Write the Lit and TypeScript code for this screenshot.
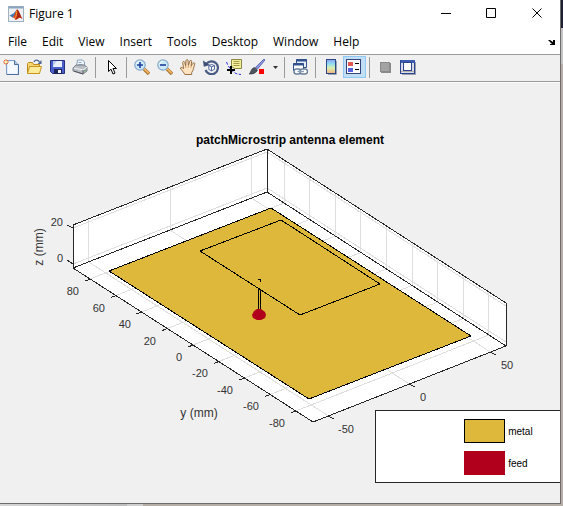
import { LitElement, html, css, svg } from "lit";
import { customElement } from "lit/decorators.js";

type Pt = [number, number];

const MENUS = ["File", "Edit", "View", "Insert", "Tools", "Desktop", "Window", "Help"];

const glass = (sign: unknown) => svg`
  <path d="M10 10l5 5" stroke="#a8752c" stroke-width="3.4"/>
  <path d="M10 9.6l4.6 4.6" stroke="#f0b565" stroke-width="1.8"/>
  <circle cx="6" cy="6" r="5.2" fill="#cdeaf8" stroke="#86a9c9" stroke-width="1.2"/>
  <path d="M2.6 5a3.8 3.8 0 0 1 3-2.8" stroke="#fff" fill="none"/>
  ${sign}`;

const ICONS: Record<string, unknown> = {
  new: svg`
    <path d="M3.500 1.500h8l4 4v10h-12z" fill="#dceafb" stroke="#7f9cc6"/>
    <path d="M5 14.500v-12h6v4h3v8z" fill="#f6faff"/>
    <path d="M11.500 1.500v4h4" fill="#b4c8e6" stroke="#4f6fa3"/>
    <path d="M15.500 6v10M4 15.500h12" stroke="#4f6fa3"/>
    <path d="M3 0v6M0 3h6M1 1l4 4M5 1l-4 4" stroke="#e8743b"/>
    <rect x="2" y="2" width="2" height="2" fill="#fff3b0"/>`,
  open: svg`
    <path d="M1.500 14.500v-10l1-1h4l1 2h6v9z" fill="#f7d774" stroke="#c08a1e"/>
    <path d="M1.500 14.500l2-7h12l-2 7z" fill="#fdeb9a" stroke="#c99420"/>
    <path d="M8 3c1-2.500 4-2.500 5.500 0" stroke="#4c6a94" fill="none" stroke-width="1.300"/>
    <path d="M15.500 1v4h-4z" fill="#4c6a94"/>`,
  save: svg`
    <path d="M1.500 1.500h14v13h-12l-2-2z" fill="#4a5fcc" stroke="#22307f"/>
    <rect x="4" y="2" width="9" height="6" fill="#e9effb"/>
    <path d="M4 2h4l-4 5z" fill="#b9c9ee"/>
    <rect x="5" y="10" width="8" height="5" fill="#1d2659"/>
    <rect x="9" y="11" width="3" height="3" fill="#f3f5fd"/>`,
  print: svg`
    <path d="M4.500 7l1-6h5l2 2v4z" fill="#eef6ff" stroke="#8aa1bd"/>
    <path d="M6.500 3.500h3M6.500 5.500h4" stroke="#8fa9cc"/>
    <path d="M1 9l3-3h8l3 2v4l-4 3-10-3z" fill="#b9bdc4" stroke="#777c85"/>
    <path d="M2 9l9 2 4-3" fill="none" stroke="#f4f5f7"/>
    <path d="M2 12l9 3M11 11v4" stroke="#555a63"/>
    <path d="M12 12l2-1" stroke="#5aa550"/>`,
  pointer: svg`
    <path d="M5.500 1.500v11l2.500-2.300 2 4.800 2-.9-2-4.600h3.500z" fill="#fff" stroke="#000"/>`,
  zoomIn: glass(svg`<path d="M3 6h6M6 3v6" stroke="#1f3f9c" stroke-width="1.600"/>`),
  zoomOut: glass(svg`<path d="M3 6h6" stroke="#1f3f9c" stroke-width="1.600"/>`),
  pan: svg`
    <path d="M4.800 15.500c-.6-2-3.800-4.600-4.400-6.600.6-1 2-.6 3.200.9L2.700 3.400c.3-1.300 1.600-1.300 2 0l1 3.300L6 1.600c.4-1.400 1.800-1.300 2 0l.4 4.700L9.800 2c.6-1.200 1.900-.8 1.900.5l-.6 4.400 1.900-2.700c.9-.9 2-.3 1.700.9-.9 3-1.300 6.400-3 8.400v2z" fill="#fde3c2" stroke="#8c6236" stroke-width=".9"/>
    <path d="M5.700 7v2M8.300 6.500v2.300M11 7v2" stroke="#c98f53" stroke-width=".8"/>`,
  rotate: svg`
    <path d="M3.200 5.200A6.400 6.400 0 1 1 2.500 11" fill="none" stroke="#4a5d85" stroke-width="2.200"/>
    <path d="M0 1.500l.8 6.300 6-1.800z" fill="#3c4f77"/>
    <path d="M5.800 6.500l3-1 2.700 1.200v3.600l-3 1.500-2.700-1.400zM5.800 6.500l2.700 1.300 3-1.100M8.500 7.800v4" fill="#fff" stroke="#3d5c92" stroke-width=".9"/>`,
  tip: svg`
    <path d="M.5 3c1 3 3 6.500 6.500 9.500s5.500 2.500 8 3" fill="none" stroke="#2b32e0" stroke-dasharray="3 1.500"/>
    <path d="M5.500 .5h10v9h-7l-3-2z" fill="#f5ee9d" stroke="#8c8743"/>
    <path d="M7.500 2.500h6M7.500 4.500h6M7.500 6.500h6" stroke="#a39b4a"/>
    <path d="M1 11h8M5 7v8" stroke="#000" stroke-width="2"/>`,
  brush: svg`
    <path d="M15 0l1 1-7.500 9-2-1.600z" fill="#8f97dd" stroke="#4a55ad" stroke-width=".8"/>
    <path d="M5.500 8.500l3 2.500c-1 3-5 4.500-8.500 4 2-1 1.500-5.500 5.500-6.500z" fill="#4c5460" stroke="#2e343d" stroke-width=".6"/>
    <rect x="10" y="10" width="5" height="5" fill="#f00"/>`,
  link: svg`
    <path d="M4.500 .5h10v8h-10z" fill="#e6eefa" stroke="#33518c"/>
    <path d="M4 1.500h11" stroke="#33518c" stroke-width="2"/>
    <path d="M1.500 4.500h10v7h-10z" fill="#fff" stroke="#33518c"/>
    <path d="M1 5.500h11" stroke="#33518c" stroke-width="2"/>
    <rect x="2" y="10" width="7" height="5" rx="2.500" fill="#fff" stroke="#6a7f99" stroke-width="1.400"/>
    <rect x="8" y="10" width="7.500" height="5" rx="2.500" fill="#fff" stroke="#6a7f99" stroke-width="1.400"/>
    <path d="M5.500 12.500h6.500" stroke="#8a9db5" stroke-width="1.400"/>`,
  colorbar: svg`
    <defs><linearGradient id="cb" x2="0" y2="1">
      <stop stop-color="#8f9cf5"/><stop offset=".3" stop-color="#8fdcf0"/>
      <stop offset=".6" stop-color="#d9f0b0"/><stop offset="1" stop-color="#f5b07a"/>
    </linearGradient></defs>
    <rect x="3.500" y=".5" width="9" height="14" fill="url(#cb)" stroke="#2d4684"/>
    <path d="M13.500 2v13.500H5" fill="none" stroke="#9aa3b5"/>`,
  legend: svg`
    <rect x=".5" y=".5" width="14" height="14" fill="#fff" stroke="#33457c"/>
    <rect x="2" y="3" width="5" height="4" fill="#e2574f"/>
    <rect x="2" y="9" width="5" height="4" fill="#5a63dd"/>
    <path d="M9 4.500h4M9 10.500h4" stroke="#000"/>`,
  hide: svg`
    <rect x="4" y="4" width="10" height="10" fill="#8a8a8a"/>
    <rect x="3.500" y="3.500" width="9" height="9" fill="#a3a3a3" stroke="#8a8a8a"/>`,
  dock: svg`
    <path d="M2 15.500h14M15.500 3v13" stroke="#9aa0ad"/>
    <rect x=".5" y="1.500" width="14" height="13" fill="#d9dde6" stroke="#2c448f"/>
    <rect x="1" y="1" width="14" height="3" fill="#3c5cb0"/>
    <rect x="3.500" y="3.500" width="8" height="8" fill="#fff" stroke="#2c448f"/>
    <path d="M1 12.500h13" stroke="#b9b2a8"/>`,
};

const TOOLS: [string, string][] = [
  ["new", "New Figure"], ["open", "Open File"], ["save", "Save Figure"], ["print", "Print Figure"], ["|", ""],
  ["pointer", "Edit Plot"], ["|", ""],
  ["zoomIn", "Zoom In"], ["zoomOut", "Zoom Out"], ["pan", "Pan"], ["rotate", "Rotate 3D"],
  ["tip", "Data Cursor"], ["brush", "Brush Data"], ["v", "Brush colour"], ["|", ""],
  ["link", "Link Plot"], ["|", ""],
  ["colorbar", "Insert Colorbar"], ["legend", "Insert Legend"], ["|", ""],
  ["hide", "Hide Plot Tools"], ["dock", "Show Plot Tools and Dock Figure"],
];

// Corners of the axes box floor as projected on screen, and its height.
const LEFT: Pt = [73, 268];
const BACK: Pt = [267, 192];
const RIGHT: Pt = [506, 346];
const FRONT: Pt = [313, 422];
const HEIGHT = 43;
const Y_RANGE = 93.4;
const X_RANGE = 59.5;

const mix = (a: Pt, b: Pt, t: number): Pt => [a[0] + (b[0] - a[0]) * t, a[1] + (b[1] - a[1]) * t];
const lift = (p: Pt, h: number): Pt => [p[0], p[1] - h];
const join = (...pts: Pt[]) => pts.map((p) => p.map((n) => n.toFixed(1)).join(",")).join(" ");
const poly = (cls: string, ...pts: Pt[]) => svg`<polyline class=${cls} points=${join(...pts)} />`;

const yT = (v: number) => (Y_RANGE - v) / (2 * Y_RANGE);
const xT = (v: number) => (v + X_RANGE) / (2 * X_RANGE);

@customElement("antenna-plot")
export class AntennaPlot extends LitElement {
  static styles = css`
    :host { display: block; }
    svg { display: block; width: 100%; height: 100%; }
    polyline, polygon { shape-rendering: crispEdges; }
    .wall { fill: #fff; }
    .grid { fill: none; stroke: #dedede; }
    .axis { fill: none; stroke: #262626; }
    .metal { fill: #deb83a; stroke: #000; }
    .wire { fill: none; stroke: #000; }
    .feed { fill: #b0001c; }
    text { font-family: "Liberation Sans", Arial, sans-serif; fill: #333; }
    .tick { font-size: 11px; }
    .label { font-size: 12px; }
    .title { font-size: 12px; font-weight: bold; fill: #000; text-anchor: middle; }
    .end { text-anchor: end; }
    .mid { text-anchor: middle; }
  `;

  render() {
    const ys = [80, 60, 40, 20, 0, -20, -40, -60, -80];
    const xs = [-50, 0, 50];
    return html`
      <svg viewBox="0 83 560 420" role="img" aria-label="3D view of a patch microstrip antenna">
        <polygon class="wall" points=${join(LEFT, lift(LEFT, HEIGHT), lift(BACK, HEIGHT), lift(RIGHT, HEIGHT), RIGHT, FRONT)} />
        ${ys.map((v) => {
          const wall = mix(BACK, RIGHT, yT(v));
          return poly("grid", mix(LEFT, FRONT, yT(v)), wall, lift(wall, HEIGHT));
        })}
        ${xs.map((v) => {
          const wall = mix(LEFT, BACK, xT(v));
          return poly("grid", mix(FRONT, RIGHT, xT(v)), wall, lift(wall, HEIGHT));
        })}
        ${[4, 40].map((h) => poly("grid", lift(LEFT, h), lift(BACK, h), lift(RIGHT, h)))}
        ${poly("axis", LEFT, BACK, RIGHT, FRONT, LEFT, lift(LEFT, HEIGHT), lift(BACK, HEIGHT), lift(RIGHT, HEIGHT), RIGHT)}
        ${poly("axis", BACK, lift(BACK, HEIGHT))}
        ${ys.map((v) => {
          const p = mix(LEFT, FRONT, yT(v));
          return svg`${poly("axis", p, [p[0] - 5, p[1] + 2])}
            <text class="tick end" x=${Math.round(p[0]) - 11} y=${Math.round(p[1]) + 16}>${v}</text>`;
        })}
        ${xs.map((v) => {
          const p = mix(FRONT, RIGHT, xT(v));
          return svg`${poly("axis", p, [p[0] + 5, p[1] + 3])}
            <text class="tick" x=${Math.round(p[0]) + 10} y=${Math.round(p[1]) + 17}>${v}</text>`;
        })}
        ${poly("axis", lift(LEFT, 40), [67, 225])}
        ${poly("axis", lift(LEFT, 4), [67, 260])}
        <text class="tick end" x="63" y="226">20</text>
        <text class="tick end" x="63" y="262">0</text>
        <text class="label mid" x="199" y="417">y (mm)</text>
        <text class="label mid" transform="rotate(-90 43 247)" x="43" y="247">z (mm)</text>
        <text class="title" x="290" y="144">patchMicrostrip antenna element</text>
        <polygon class="metal" points="109,271 271,208 471,336 309,399" />
        <polygon class="wire" points="200,251 281,220 380,284 300,315" />
        <polyline class="wire" points="258,279 260,279 261,282" />
        <rect x="258" y="289" width="3" height="23" fill="#000" />
        <rect x="259" y="290" width="1" height="22" fill="#deb83a" />
        <path class="feed" d="M252 315l2-4 3-2h4l4 3 1 3-1 3-4 2h-4l-4-2z" />
      </svg>`;
  }
}

@customElement("app-root")
export class AppRoot extends LitElement {
  static styles = css`
    :host {
      display: flex;
      box-sizing: border-box;
      min-height: 100vh;
      padding: 0 2px 2px 0;
      background:
        linear-gradient(#1c2036 28px, #c4c4c4 28px, #c4c4c4 64px, #b5aea6 64px) right / 2px 100% no-repeat,
        linear-gradient(90deg, #d6d6d6, #bdbdbd 127px, #cfcfcf 127px, #cfcfcf 143px, #b5aea6 143px);
      font: 12px/16px "Open Sans", "Noto Sans", sans-serif;
      color: #000;
    }
    * { box-sizing: border-box; }
    button { border: 0; padding: 0; margin: 0; background: none; font: inherit; color: inherit; }
    svg { display: block; }
    .window {
      flex: 1;
      min-width: 0;
      display: flex;
      flex-direction: column;
      background: #f0f0f0;
      border: solid #6e6a68;
      border-width: 0 1px 1px 0;
    }
    .titlebar { display: flex; align-items: center; height: 27px; padding-left: 8px; background: #fff; }
    .title { flex: 1; margin: 0 0 0 5px; font: inherit; }
    .control { display: grid; place-items: center; width: 46px; height: 27px; }
    .menubar { display: flex; align-items: center; gap: 15px; height: 27px; padding: 2px 5px 0 8px; background: #fff; }
    .undock { margin-left: auto; }
    .toolbar {
      display: flex;
      align-items: center;
      height: 28px;
      padding-bottom: 2px;
      border: solid #9c9c9c;
      border-width: 1px 0;
    }
    .tool {
      display: flex;
      align-items: center;
      width: 23px;
      height: 22px;
      padding-left: 2px;
      flex: none;
      border: 1px solid transparent;
    }
    .on { background: #c2def5; border-color: #90c8f6; }
    .caret { width: 12px; flex: none; display: grid; place-items: center; }
    .sep { width: 1px; height: 21px; margin: 0 4px 0 3px; background: #9a9a9a; flex: none; }
    .figure { position: relative; flex: 1; border-top: 1px solid #fafafa; overflow: hidden; }
    .legend {
      position: absolute;
      right: 0;
      bottom: 20px;
      width: 33%;
      height: 73px;
      margin: 0;
      padding: 8px 0 0 88px;
      display: flex;
      flex-direction: column;
      gap: 8px;
      list-style: none;
      background: #fff;
      border: solid #262626;
      border-width: 1px 0 1px 1px;
      font: 10px/26px "Liberation Sans", Arial, sans-serif;
    }
    .entry { display: flex; gap: 3px; height: 24px; }
    .swatch { width: 41px; height: 24px; flex: none; }
    .metal { background: #deb83a; border: 1px solid #000; }
    .feed { background: #b0001c; }
  `;

  private tool([id, name]: [string, string]) {
    if (id === "|") return html`<span class="sep"></span>`;
    if (id === "v")
      return html`<button class="caret" aria-label=${name}>
        <svg width="5" height="3"><path d="M0 0h5L2.500 3z" fill="#333" /></svg>
      </button>`;
    return html`<button class="tool ${id === "legend" ? "on" : ""}" aria-label=${name} aria-pressed=${id === "legend"}>
      <svg width="16" height="16" fill="none">${ICONS[id]}</svg>
    </button>`;
  }

  private control(name: string, d: string) {
    return html`<button class="control" aria-label=${name}>
      <svg width="11" height="11" fill="none" stroke="#000"><path d=${d} /></svg>
    </button>`;
  }

  render() {
    return html`
      <main class="window">
        <header class="titlebar">
          <svg width="16" height="16">
            <rect x=".5" y=".5" width="15" height="15" fill="#edf1f5" stroke="#9fb0bf" />
            <path d="M1 1.500h14" stroke="#8aa6c0" stroke-width="2" />
            <path d="M1.500 9.500l4-2 2.500-3-1.500 5.500-2 1.500z" fill="#3b78b5" />
            <path d="M4.500 11.500C7 10 7.500 3.500 9 3.500c1.500 0 2.500 5 5.500 9.500-2-1.500-3-1.500-4-.5L7.500 14c-.5-1.500-1.500-2.500-3-2.500z" fill="#d9481c" />
            <path d="M9 3.500c.5 3 .5 6-1.500 10.500l2.500-2c1-1 2-1 4.500 1C12 9 11 3.500 9 3.500z" fill="#a5260e" />
            <path d="M8.500 5c.5 2 0 5-1.500 7" stroke="#f39a3a" fill="none" />
          </svg>
          <h1 class="title">Figure 1</h1>
          ${this.control("Minimize", "M1 5.500h10")}
          ${this.control("Maximize", "M.5 .5h9v9h-9z")}
          ${this.control("Close", "M.5 .5l9 9M9.500 .5l-9 9")}
        </header>
        <nav class="menubar">
          ${MENUS.map((m) => html`<button>${m}</button>`)}
          <button class="undock" aria-label="Dock figure">
            <svg width="7" height="6"><path d="M0 1h2l3 2V1h2v5H2V5h2L1 2z" fill="#000" /></svg>
          </button>
        </nav>
        <div class="toolbar" role="toolbar" aria-label="Figure tools">${TOOLS.map((t) => this.tool(t))}</div>
        <section class="figure">
          <antenna-plot></antenna-plot>
          <ul class="legend">
            <li class="entry"><span class="swatch metal"></span>metal</li>
            <li class="entry"><span class="swatch feed"></span>feed</li>
          </ul>
        </section>
      </main>`;
  }
}
